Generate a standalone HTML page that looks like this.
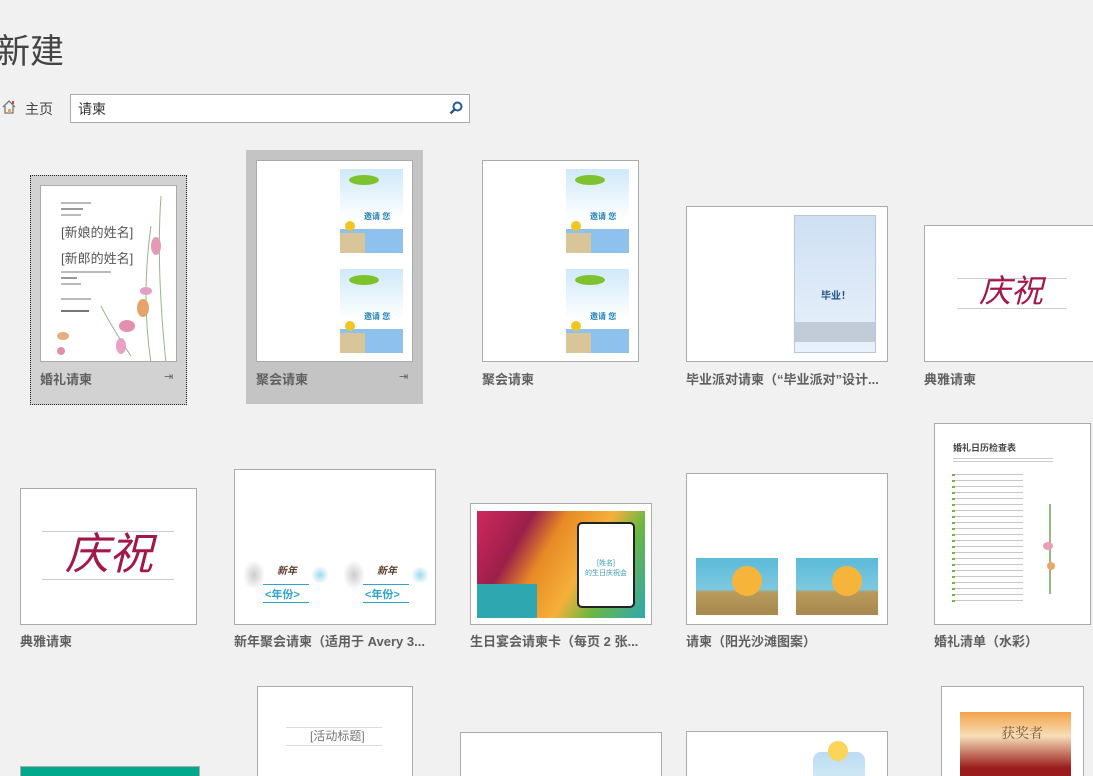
<!DOCTYPE html>
<html><head><meta charset="utf-8"><style>
*{margin:0;padding:0;box-sizing:border-box}
html,body{width:1093px;height:776px;overflow:hidden}
body{background:#f1f1f1;font-family:"Liberation Sans","Noto Sans CJK SC",sans-serif;position:relative}
.a{position:absolute}
.t{position:absolute;background:#fff;border:1px solid #ababab;overflow:hidden}
.l{position:absolute;font-size:13px;font-weight:bold;color:#5f5f5f;white-space:nowrap}
</style></head><body>
<div class="a" style="left:-4px;top:24px;font-size:34px;color:#444">新建</div>
<svg class="a" style="left:1px;top:99px" width="16" height="16" viewBox="0 0 16 16"><path d="M2 8 L8 2 L14 8 M4 7 V14 H12 V7" fill="none" stroke="#777" stroke-width="1.3"/><rect x="7" y="10" width="3" height="4" fill="#e2a85a"/><rect x="11" y="2" width="2" height="3" fill="#d24726"/></svg>
<div class="a" style="left:25px;top:99px;font-size:14px;color:#444">主页</div>
<div class="a" style="left:70px;top:94px;width:400px;height:29px;background:#fff;border:1px solid #ababab"></div>
<div class="a" style="left:78px;top:99px;font-size:14px;color:#333">请柬</div>
<svg class="a" style="left:449px;top:101px" width="14" height="14" viewBox="0 0 14 14"><circle cx="8.5" cy="5.5" r="4" fill="none" stroke="#2b579a" stroke-width="2"/><path d="M5.5 8.5 L1.5 12.5" stroke="#2b579a" stroke-width="2.4"/></svg>

<div class="a" style="left:30px;top:175px;width:157px;height:230px;background:#d2d2d2;border:1px dotted #222"></div>
<div class="t" style="left:40px;top:185px;width:137px;height:177px">
<div class="a" style="left:20px;top:16px;width:30px;height:2px;background:#bbb"></div>
<div class="a" style="left:20px;top:22px;width:22px;height:2px;background:#999"></div>
<div class="a" style="left:20px;top:28px;width:20px;height:2px;background:#bbb"></div>
<div class="a" style="left:20px;top:36px;font-size:13px;color:#555">[新娘的姓名]</div>
<div class="a" style="left:20px;top:62px;font-size:13px;color:#555">[新郎的姓名]</div>
<div class="a" style="left:20px;top:85px;width:50px;height:2px;background:#bbb"></div>
<div class="a" style="left:20px;top:91px;width:16px;height:2px;background:#999"></div>
<div class="a" style="left:20px;top:97px;width:20px;height:2px;background:#bbb"></div>
<div class="a" style="left:20px;top:112px;width:30px;height:2px;background:#bbb"></div>
<div class="a" style="left:20px;top:124px;width:28px;height:2px;background:#777"></div>
<svg class="a" style="left:0;top:0" width="137" height="177"><path d="M120 10 Q115 80 125 177 M110 40 Q100 110 110 177 M90 170 Q70 140 60 120" stroke="#9bb48a" fill="none"/><ellipse cx="115" cy="60" rx="5" ry="9" fill="#e49ab4"/><ellipse cx="105" cy="105" rx="6" ry="4" fill="#e8a0c0"/><ellipse cx="102" cy="122" rx="6" ry="9" fill="#e6a36a"/><ellipse cx="86" cy="140" rx="8" ry="6" fill="#e38fae"/><ellipse cx="80" cy="160" rx="5" ry="8" fill="#eaa0c4"/><ellipse cx="22" cy="150" rx="6" ry="4" fill="#e6b07a"/><ellipse cx="20" cy="165" rx="4" ry="4" fill="#e38fae"/></svg>
</div>
<div class="l" style="left:40px;top:369px">婚礼请柬</div>
<div class="a" style="left:164px;top:370px;font-size:11px;color:#666">⇥</div>

<div class="a" style="left:246px;top:150px;width:177px;height:254px;background:#c4c4c4"></div>
<div class="t" style="left:256px;top:160px;width:157px;height:202px">
<div class="a" style="left:83px;top:8px;width:63px;height:84px;background:linear-gradient(#cfe9fa,#fff 60%)"></div>
<div class="a" style="left:83px;top:68px;width:63px;height:24px;background:#8fc1ee"></div>
<div class="a" style="left:83px;top:72px;width:25px;height:20px;background:#d8c69a"></div>
<div class="a" style="left:107px;top:50px;font-size:8px;font-weight:bold;color:#1d7fb5">邀请 您</div>
<div class="a" style="left:88px;top:60px;width:10px;height:10px;border-radius:50%;background:#f3c522"></div>
<div class="a" style="left:92px;top:14px;width:30px;height:10px;border-radius:50%;background:#7ec32d"></div>
<div class="a" style="left:83px;top:108px;width:63px;height:84px;background:linear-gradient(#cfe9fa,#fff 60%)"></div>
<div class="a" style="left:83px;top:168px;width:63px;height:24px;background:#8fc1ee"></div>
<div class="a" style="left:83px;top:172px;width:25px;height:20px;background:#d8c69a"></div>
<div class="a" style="left:107px;top:150px;font-size:8px;font-weight:bold;color:#1d7fb5">邀请 您</div>
<div class="a" style="left:88px;top:160px;width:10px;height:10px;border-radius:50%;background:#f3c522"></div>
<div class="a" style="left:92px;top:114px;width:30px;height:10px;border-radius:50%;background:#7ec32d"></div>
</div>
<div class="l" style="left:256px;top:369px">聚会请柬</div>
<div class="a" style="left:399px;top:370px;font-size:11px;color:#666">⇥</div>

<div class="t" style="left:482px;top:160px;width:157px;height:202px">
<div class="a" style="left:83px;top:8px;width:63px;height:84px;background:linear-gradient(#cfe9fa,#fff 60%)"></div>
<div class="a" style="left:83px;top:68px;width:63px;height:24px;background:#8fc1ee"></div>
<div class="a" style="left:83px;top:72px;width:25px;height:20px;background:#d8c69a"></div>
<div class="a" style="left:107px;top:50px;font-size:8px;font-weight:bold;color:#1d7fb5">邀请 您</div>
<div class="a" style="left:88px;top:60px;width:10px;height:10px;border-radius:50%;background:#f3c522"></div>
<div class="a" style="left:92px;top:14px;width:30px;height:10px;border-radius:50%;background:#7ec32d"></div>
<div class="a" style="left:83px;top:108px;width:63px;height:84px;background:linear-gradient(#cfe9fa,#fff 60%)"></div>
<div class="a" style="left:83px;top:168px;width:63px;height:24px;background:#8fc1ee"></div>
<div class="a" style="left:83px;top:172px;width:25px;height:20px;background:#d8c69a"></div>
<div class="a" style="left:107px;top:150px;font-size:8px;font-weight:bold;color:#1d7fb5">邀请 您</div>
<div class="a" style="left:88px;top:160px;width:10px;height:10px;border-radius:50%;background:#f3c522"></div>
<div class="a" style="left:92px;top:114px;width:30px;height:10px;border-radius:50%;background:#7ec32d"></div>
</div>
<div class="l" style="left:482px;top:369px">聚会请柬</div>

<div class="t" style="left:686px;top:206px;width:202px;height:156px">
<div class="a" style="left:107px;top:8px;width:82px;height:138px;background:linear-gradient(#cfe0f3,#e9f1fb);border:1px solid #b8c8dc"></div>
<div class="a" style="left:134px;top:80px;font-size:10px;font-weight:bold;color:#1f4e8c">毕业！</div>
<div class="a" style="left:108px;top:115px;width:80px;height:20px;background:#c2ccd8"></div>
</div>
<div class="l" style="left:686px;top:369px">毕业派对请柬（“毕业派对”设计...</div>

<div class="t" style="left:924px;top:225px;width:175px;height:137px">
<div class="a" style="left:32px;top:52px;width:110px;height:1px;background:#ccc"></div>
<div class="a" style="left:32px;top:82px;width:110px;height:1px;background:#ccc"></div>
<div class="a" style="left:54px;top:46px;font-size:32px;font-style:italic;color:#a1184b;line-height:38px">庆祝</div>
</div>
<div class="l" style="left:924px;top:369px">典雅请柬</div>

<div class="t" style="left:20px;top:488px;width:177px;height:137px">
<div class="a" style="left:21px;top:42px;width:132px;height:1px;background:#ccc"></div>
<div class="a" style="left:21px;top:90px;width:132px;height:1px;background:#ccc"></div>
<div class="a" style="left:44px;top:40px;font-size:44px;font-style:italic;color:#a1184b;line-height:52px">庆祝</div>
</div>
<div class="l" style="left:20px;top:631px">典雅请柬</div>

<div class="t" style="left:234px;top:469px;width:202px;height:156px">
<div class="a" style="left:42px;top:92px;font-size:10px;font-style:italic;font-weight:bold;color:#5a3a2a">新年</div>
<div class="a" style="left:28px;top:114px;width:46px;height:1px;background:#2ea6c9"></div>
<div class="a" style="left:30px;top:116px;font-size:11px;font-weight:bold;color:#2ea6c9">&lt;年份&gt;</div>
<div class="a" style="left:28px;top:132px;width:46px;height:1px;background:#2ea6c9"></div>
<div class="a" style="left:142px;top:92px;font-size:10px;font-style:italic;font-weight:bold;color:#5a3a2a">新年</div>
<div class="a" style="left:128px;top:114px;width:46px;height:1px;background:#2ea6c9"></div>
<div class="a" style="left:130px;top:116px;font-size:11px;font-weight:bold;color:#2ea6c9">&lt;年份&gt;</div>
<div class="a" style="left:128px;top:132px;width:46px;height:1px;background:#2ea6c9"></div>
<div class="a" style="left:76px;top:96px;width:18px;height:18px;border-radius:50%;background:radial-gradient(#9fd8ee,transparent 70%)"></div>
<div class="a" style="left:176px;top:96px;width:18px;height:18px;border-radius:50%;background:radial-gradient(#9fd8ee,transparent 70%)"></div>
<div class="a" style="left:8px;top:90px;width:22px;height:30px;background:radial-gradient(#ccc,transparent 70%)"></div>
<div class="a" style="left:108px;top:90px;width:22px;height:30px;background:radial-gradient(#ccc,transparent 70%)"></div>
</div>
<div class="l" style="left:234px;top:631px">新年聚会请柬（适用于 Avery 3...</div>

<div class="t" style="left:470px;top:503px;width:182px;height:122px">
<div class="a" style="left:6px;top:7px;width:168px;height:107px;background:linear-gradient(120deg,#d0285e 0%,#9b1f4a 25%,#e78a25 40%,#f5b03a 60%,#6cb842 75%,#2fa7b0 100%)"></div>
<div class="a" style="left:6px;top:80px;width:60px;height:34px;background:#2fa7b0"></div>
<div class="a" style="left:106px;top:18px;width:58px;height:86px;background:#fff;border:2px solid #222;border-radius:5px"></div>
<div class="a" style="left:114px;top:54px;font-size:7px;color:#3a9ab0;text-align:center;width:42px">[姓名]<br>的生日庆祝会</div>
</div>
<div class="l" style="left:470px;top:631px">生日宴会请柬卡（每页 2 张...</div>

<div class="t" style="left:686px;top:473px;width:202px;height:152px">
<div class="a" style="left:9px;top:84px;width:82px;height:57px;background:linear-gradient(#5bbbd8 0%,#7ec8df 55%,#b89a5c 60%,#a88a50 100%)"></div>
<div class="a" style="left:45px;top:92px;width:30px;height:30px;border-radius:50%;background:#f6b53a"></div>
<div class="a" style="left:109px;top:84px;width:82px;height:57px;background:linear-gradient(#5bbbd8 0%,#7ec8df 55%,#b89a5c 60%,#a88a50 100%)"></div>
<div class="a" style="left:145px;top:92px;width:30px;height:30px;border-radius:50%;background:#f6b53a"></div>
</div>
<div class="l" style="left:686px;top:631px">请柬（阳光沙滩图案）</div>

<div class="t" style="left:934px;top:423px;width:157px;height:202px">
<div class="a" style="left:18px;top:17px;font-size:9px;font-weight:bold;color:#444">婚礼日历检查表</div>
<div class="a" style="left:18px;top:34px;width:100px;height:5px;background:repeating-linear-gradient(#ccc 0 1px,transparent 1px 3px)"></div>
<div class="a" style="left:18px;top:50px;width:70px;height:130px;background:repeating-linear-gradient(#c8c8c8 0 1px,transparent 1px 6px)"></div>
<div class="a" style="left:17px;top:50px;width:3px;height:130px;background:repeating-linear-gradient(#7cb24a 0 2px,transparent 2px 6px)"></div>
<div class="a" style="left:114px;top:80px;width:2px;height:90px;background:#9bb48a"></div>
<div class="a" style="left:108px;top:118px;width:10px;height:8px;border-radius:50%;background:#e6a0b8"></div>
<div class="a" style="left:112px;top:138px;width:8px;height:8px;border-radius:50%;background:#eaa86a"></div>
</div>
<div class="l" style="left:934px;top:631px">婚礼清单（水彩）</div>

<div class="a" style="left:20px;top:766px;width:180px;height:12px;background:#00a88c;border:1px solid #ababab"></div>
<div class="t" style="left:257px;top:686px;width:156px;height:100px">
<div class="a" style="left:28px;top:40px;width:96px;height:1px;background:#ddd"></div>
<div class="a" style="left:52px;top:40px;font-size:12px;color:#777">[活动标题]</div>
<div class="a" style="left:28px;top:58px;width:96px;height:1px;background:#ddd"></div>
</div>
<div class="t" style="left:460px;top:732px;width:202px;height:60px"></div>
<div class="t" style="left:686px;top:731px;width:202px;height:60px">
<div class="a" style="left:126px;top:20px;width:52px;height:40px;border-radius:8px;background:linear-gradient(#bcdcf2,#dceefa)"></div>
<div class="a" style="left:141px;top:9px;width:20px;height:20px;border-radius:50%;background:#fbd45a"></div>
</div>
<div class="t" style="left:941px;top:686px;width:143px;height:100px">
<div class="a" style="left:18px;top:25px;width:111px;height:80px;background:linear-gradient(#f3a24a 0%,#f7dfb8 30%,#9a1c1c 70%)"></div>
<div class="a" style="left:59px;top:36px;font-size:14px;color:#7a5a3a;font-family:'Noto Serif CJK SC',serif">获奖者</div>
</div>
</body></html>
